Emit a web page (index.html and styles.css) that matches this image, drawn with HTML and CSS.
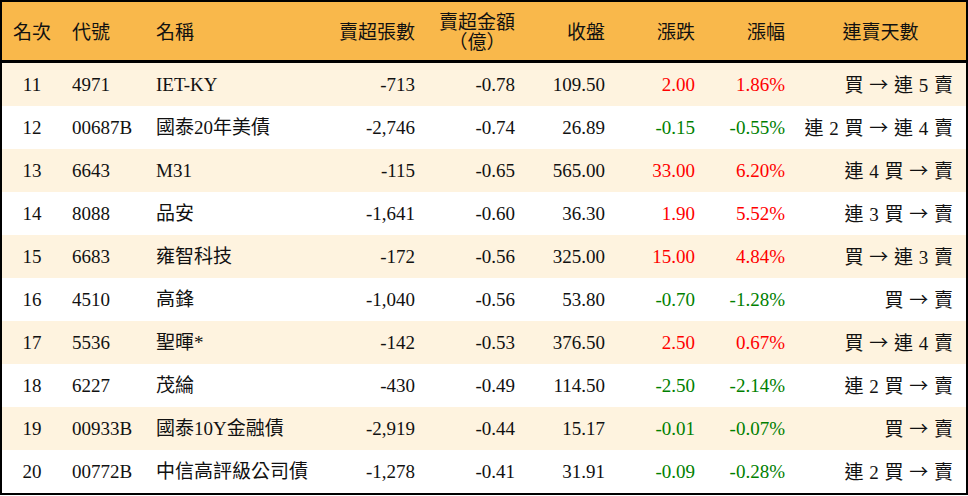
FILE: index.html
```html
<!DOCTYPE html>
<html lang="zh-Hant">
<head>
<meta charset="utf-8">
<title>賣超排行</title>
<link rel="stylesheet" href="styles.css">
</head>
<body>
<div class="table">
  <div class="row head">
    <div class="c c1">名次</div>
    <div class="c c2">代號</div>
    <div class="c c3">名稱</div>
    <div class="c num">賣超張數</div>
    <div class="c num"><span class="two">賣超金額<br>（億）</span></div>
    <div class="c num">收盤</div>
    <div class="c num">漲跌</div>
    <div class="c num">漲幅</div>
    <div class="c days-h">連賣天數</div>
  </div>
  <div class="row odd">
    <div class="c c1">11</div><div class="c c2">4971</div><div class="c c3">IET-KY</div>
    <div class="c num">-713</div><div class="c num">-0.78</div><div class="c num">109.50</div>
    <div class="c num up">2.00</div><div class="c num up">1.86%</div><div class="c days">買 <span class="ar">→</span> 連 5 賣</div>
  </div>
  <div class="row">
    <div class="c c1">12</div><div class="c c2">00687B</div><div class="c c3">國泰20年美債</div>
    <div class="c num">-2,746</div><div class="c num">-0.74</div><div class="c num">26.89</div>
    <div class="c num down">-0.15</div><div class="c num down">-0.55%</div><div class="c days">連 2 買 <span class="ar">→</span> 連 4 賣</div>
  </div>
  <div class="row odd">
    <div class="c c1">13</div><div class="c c2">6643</div><div class="c c3">M31</div>
    <div class="c num">-115</div><div class="c num">-0.65</div><div class="c num">565.00</div>
    <div class="c num up">33.00</div><div class="c num up">6.20%</div><div class="c days">連 4 買 <span class="ar">→</span> 賣</div>
  </div>
  <div class="row">
    <div class="c c1">14</div><div class="c c2">8088</div><div class="c c3">品安</div>
    <div class="c num">-1,641</div><div class="c num">-0.60</div><div class="c num">36.30</div>
    <div class="c num up">1.90</div><div class="c num up">5.52%</div><div class="c days">連 3 買 <span class="ar">→</span> 賣</div>
  </div>
  <div class="row odd">
    <div class="c c1">15</div><div class="c c2">6683</div><div class="c c3">雍智科技</div>
    <div class="c num">-172</div><div class="c num">-0.56</div><div class="c num">325.00</div>
    <div class="c num up">15.00</div><div class="c num up">4.84%</div><div class="c days">買 <span class="ar">→</span> 連 3 賣</div>
  </div>
  <div class="row">
    <div class="c c1">16</div><div class="c c2">4510</div><div class="c c3">高鋒</div>
    <div class="c num">-1,040</div><div class="c num">-0.56</div><div class="c num">53.80</div>
    <div class="c num down">-0.70</div><div class="c num down">-1.28%</div><div class="c days">買 <span class="ar">→</span> 賣</div>
  </div>
  <div class="row odd">
    <div class="c c1">17</div><div class="c c2">5536</div><div class="c c3">聖暉*</div>
    <div class="c num">-142</div><div class="c num">-0.53</div><div class="c num">376.50</div>
    <div class="c num up">2.50</div><div class="c num up">0.67%</div><div class="c days">買 <span class="ar">→</span> 連 4 賣</div>
  </div>
  <div class="row">
    <div class="c c1">18</div><div class="c c2">6227</div><div class="c c3">茂綸</div>
    <div class="c num">-430</div><div class="c num">-0.49</div><div class="c num">114.50</div>
    <div class="c num down">-2.50</div><div class="c num down">-2.14%</div><div class="c days">連 2 買 <span class="ar">→</span> 賣</div>
  </div>
  <div class="row odd">
    <div class="c c1">19</div><div class="c c2">00933B</div><div class="c c3">國泰10Y金融債</div>
    <div class="c num">-2,919</div><div class="c num">-0.44</div><div class="c num">15.17</div>
    <div class="c num down">-0.01</div><div class="c num down">-0.07%</div><div class="c days">買 <span class="ar">→</span> 賣</div>
  </div>
  <div class="row">
    <div class="c c1">20</div><div class="c c2">00772B</div><div class="c c3">中信高評級公司債</div>
    <div class="c num">-1,278</div><div class="c num">-0.41</div><div class="c num">31.91</div>
    <div class="c num down">-0.09</div><div class="c num down">-0.28%</div><div class="c days">連 2 買 <span class="ar">→</span> 賣</div>
  </div>
</div>
</body>
</html>
```
FILE: styles.css
```css
html, body {
  margin: 0;
  padding: 0;
  background: #ffffff;
}
.table {
  width: 968px;
  box-sizing: border-box;
  border: 2px solid #000;
  font-family: "Liberation Serif", "Noto Sans CJK TC", serif;
  font-size: 19px;
  color: #111;
}
.row {
  display: grid;
  grid-template-columns: 60px 84px 179px 100px 100px 90px 90px 90px 171px;
  height: 43px;
  align-items: center;
  background: #ffffff;
}
.row.odd {
  background: #fef3df;
}
.row.head {
  height: 58px;
  background: #f9b84b;
  border-bottom: 3px solid #000;
  font-family: "Noto Sans CJK TC", serif;
}
.c {
  white-space: nowrap;
  line-height: 22px;
}
.c1 {
  text-align: center;
}
.c2, .c3 {
  padding-left: 10px;
}
.num {
  text-align: right;
  padding-right: 10px;
}
.two {
  display: inline-block;
  text-align: center;
  font-size: 19px;
  line-height: 20px;
}
.days-h {
  text-align: center;
}
.days {
  text-align: right;
  padding-right: 13px;
  word-spacing: 1px;
}
.ar {
  font-family: "Noto Sans CJK TC", sans-serif;
  font-size: 19px;
}
.up {
  color: #ff0000;
}
.down {
  color: #008000;
}
```
